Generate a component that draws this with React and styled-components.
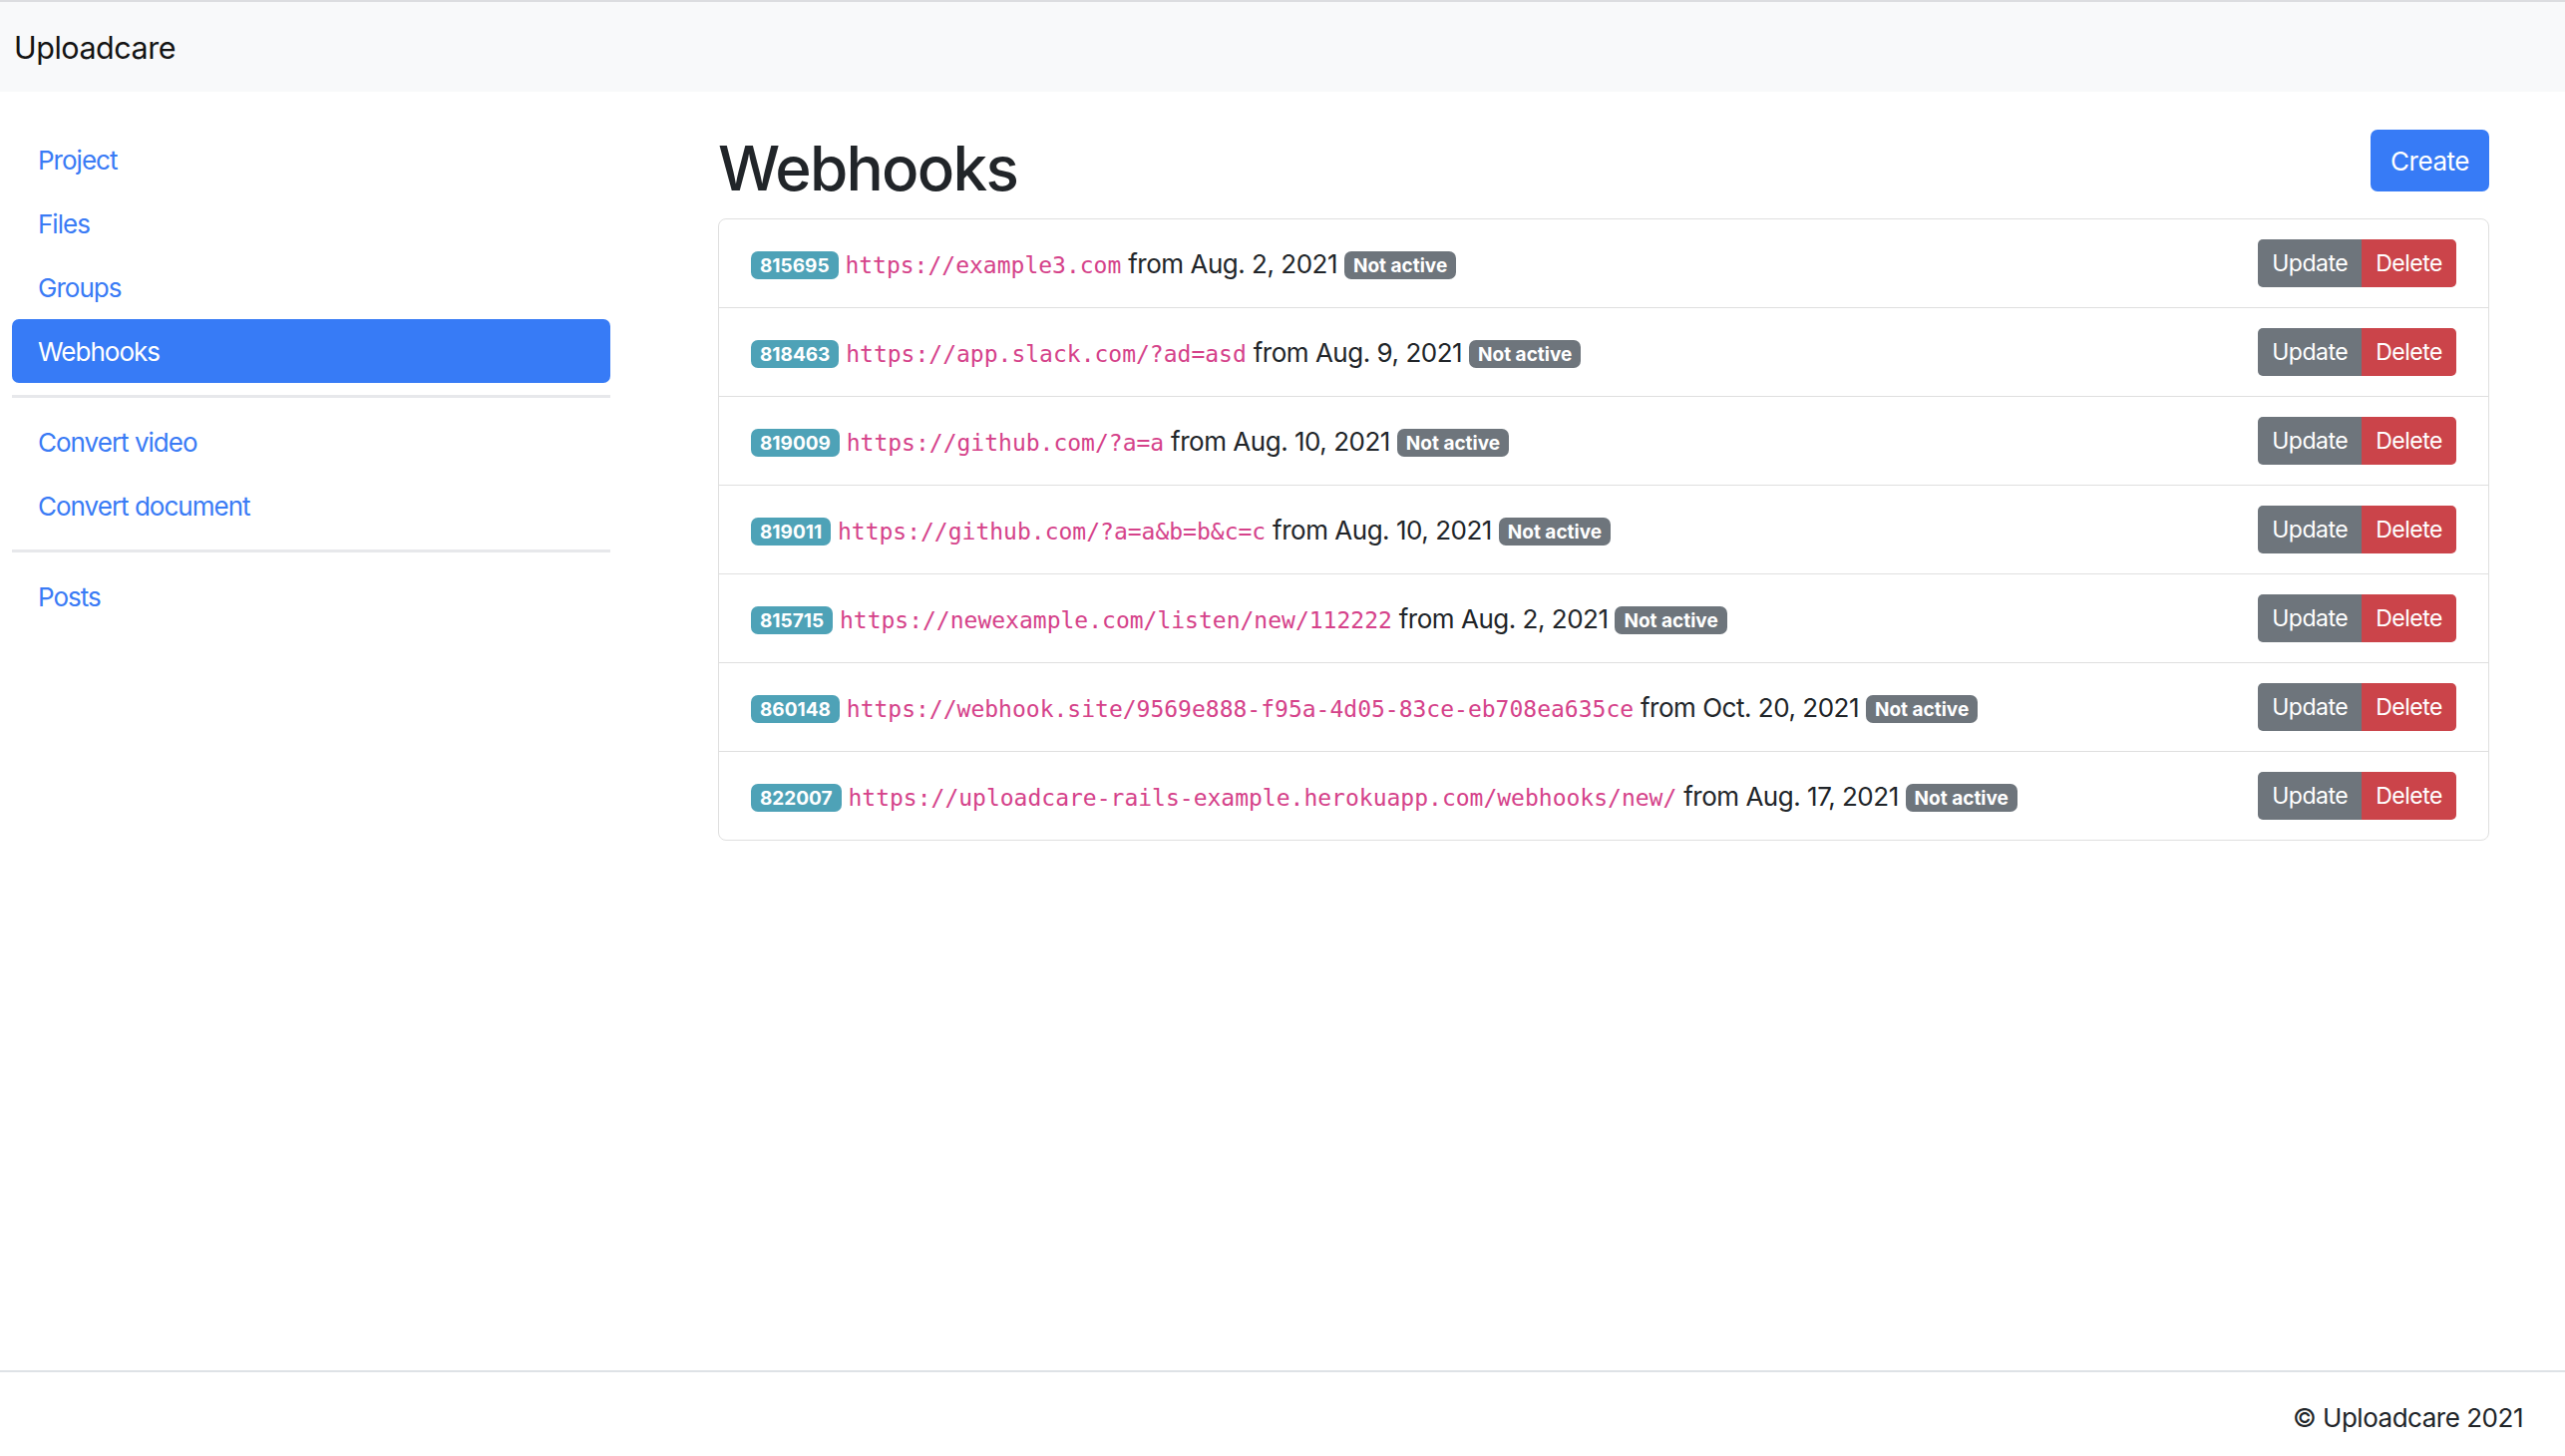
import React from "react";
import styled, { createGlobalStyle } from "styled-components";

const GlobalStyle = createGlobalStyle`
  html, body { margin: 0; padding: 0; }
  body {
    font-family: Inter, "Noto Sans", "Liberation Sans", sans-serif;
    letter-spacing: -0.03em;
    color: #212529;
    background: #ffffff;
  }
  * { box-sizing: border-box; }
`;

const Page = styled.div`
  min-height: 100vh;
  display: flex;
  flex-direction: column;
`;

const Navbar = styled.header`
  height: 92px;
  border-top: 2px solid #dcdde0;
  background: #f8f9fa;
  display: flex;
  align-items: center;
  padding-left: 14px;
`;

const Brand = styled.a`
  font-size: 30.5px;
  color: #141414;
  text-decoration: none;
`;

const Body = styled.div`
  flex: 1;
  display: grid;
  grid-template-columns: 600px 1fr;
  column-gap: 108px;
  padding: 0 76px 0 12px;
`;

const Sidebar = styled.nav`
  padding-top: 36px;
  display: flex;
  flex-direction: column;
`;

const NavLink = styled.a`
  display: flex;
  align-items: center;
  height: 64px;
  padding: 0 26px;
  font-size: 26px;
  letter-spacing: -0.038em;
  border-radius: 7px;
  text-decoration: none;
  color: ${(p) => (p.$active ? "#ffffff" : "#3a7bf5")};
  background: ${(p) => (p.$active ? "#377bf6" : "transparent")};
`;

const Divider = styled.hr`
  margin: 12px 0;
  border: 0;
  height: 3px;
  background: #e7e8eb;
`;

const Main = styled.main`
  padding-top: 38px;
`;

const Header = styled.div`
  display: flex;
  justify-content: space-between;
  align-items: flex-start;
  margin-bottom: 13px;
`;

const Title = styled.h1`
  margin: 2px 0 0;
  font-size: 62px;
  font-weight: 500;
  line-height: 1.2;
  letter-spacing: -1.75px;
  color: #212529;
`;

const CreateButton = styled.button`
  height: 62px;
  padding: 0 20px;
  border: 0;
  border-radius: 7px;
  background: #377bf6;
  color: #ffffff;
  font-family: inherit;
  letter-spacing: inherit;
  font-size: 26px;
`;

const List = styled.div`
  border: 1.5px solid #dfdfdf;
  border-radius: 8px;
`;

const Row = styled.div`
  display: flex;
  align-items: center;
  justify-content: space-between;
  padding: 20px 32px;
  min-height: 88px;
  & + & {
    border-top: 1.5px solid #dfdfdf;
  }
`;

const RowText = styled.div`
  font-size: 26px;
  line-height: 1.5;
  color: #212529;
`;

const Badge = styled.span`
  display: inline-block;
  font-size: 19px;
  font-weight: 700;
  line-height: 1;
  letter-spacing: 0;
  padding: 4.5px 9px;
  border-radius: 7px;
  color: #ffffff;
  vertical-align: 1px;
  background: ${(p) => (p.$tone === "info" ? "#4ea2b7" : "#6e757c")};
`;

const Code = styled.code`
  font-family: "DejaVu Sans Mono", "Liberation Mono", monospace;
  font-size: 23px;
  letter-spacing: 0;
  color: #d5428a;
`;

const ButtonGroup = styled.div`
  display: flex;
  flex-shrink: 0;
`;

const ActionButton = styled.button`
  height: 48px;
  padding: 0 14px;
  border: 0;
  font-family: inherit;
  letter-spacing: inherit;
  font-size: 23px;
  color: #ffffff;
  background: ${(p) => (p.$variant === "danger" ? "#cb444a" : "#6e757c")};
  border-radius: ${(p) => (p.$variant === "danger" ? "0 5px 5px 0" : "5px 0 0 5px")};
`;

const Footer = styled.footer`
  border-top: 2px solid #dee2e6;
  height: 86px;
  display: flex;
  align-items: center;
  justify-content: flex-end;
  padding: 6px 42px 0 0;
  font-size: 26px;
  color: #212529;
`;

const hooks = [
  { id: "815695", url: "https://example3.com", date: "Aug. 2, 2021" },
  { id: "818463", url: "https://app.slack.com/?ad=asd", date: "Aug. 9, 2021" },
  { id: "819009", url: "https://github.com/?a=a", date: "Aug. 10, 2021" },
  { id: "819011", url: "https://github.com/?a=a&b=b&c=c", date: "Aug. 10, 2021" },
  { id: "815715", url: "https://newexample.com/listen/new/112222", date: "Aug. 2, 2021" },
  { id: "860148", url: "https://webhook.site/9569e888-f95a-4d05-83ce-eb708ea635ce", date: "Oct. 20, 2021" },
  { id: "822007", url: "https://uploadcare-rails-example.herokuapp.com/webhooks/new/", date: "Aug. 17, 2021" },
];

export default function App() {
  return (
    <Page>
      <GlobalStyle />
      <Navbar>
        <Brand href="#">Uploadcare</Brand>
      </Navbar>
      <Body>
        <Sidebar>
          <NavLink href="#">Project</NavLink>
          <NavLink href="#">Files</NavLink>
          <NavLink href="#">Groups</NavLink>
          <NavLink href="#" $active>Webhooks</NavLink>
          <Divider />
          <NavLink href="#">Convert video</NavLink>
          <NavLink href="#">Convert document</NavLink>
          <Divider />
          <NavLink href="#">Posts</NavLink>
        </Sidebar>
        <Main>
          <Header>
            <Title>Webhooks</Title>
            <CreateButton>Create</CreateButton>
          </Header>
          <List>
            {hooks.map((h) => (
              <Row key={h.id + h.url}>
                <RowText>
                  <Badge $tone="info">{h.id}</Badge> <Code>{h.url}</Code> from {h.date}{" "}
                  <Badge>Not active</Badge>
                </RowText>
                <ButtonGroup>
                  <ActionButton>Update</ActionButton>
                  <ActionButton $variant="danger">Delete</ActionButton>
                </ButtonGroup>
              </Row>
            ))}
          </List>
        </Main>
      </Body>
      <Footer>© Uploadcare 2021</Footer>
    </Page>
  );
}
